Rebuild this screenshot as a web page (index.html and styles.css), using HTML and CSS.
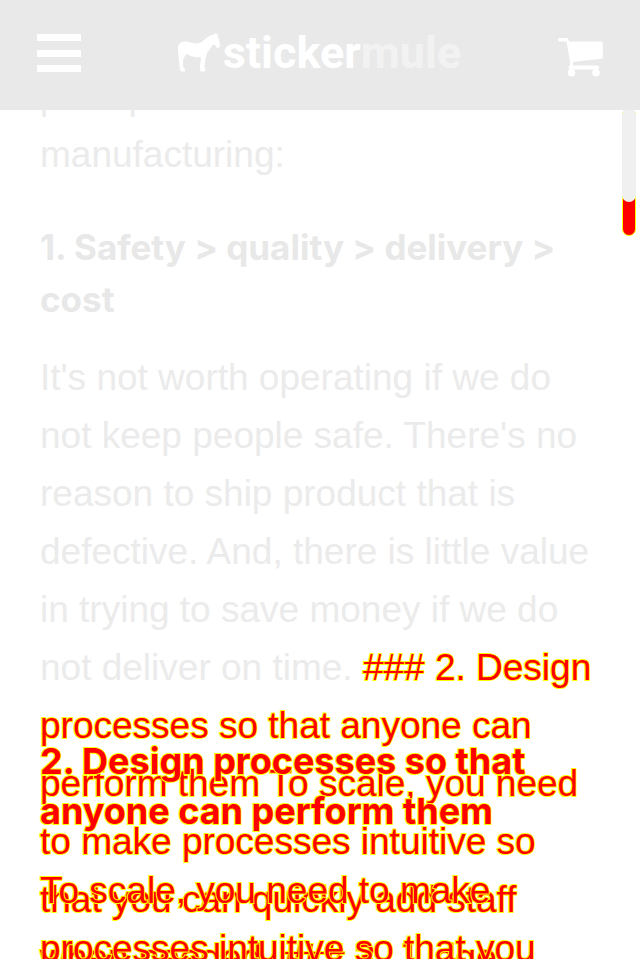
FILE: index.html
```html
<!DOCTYPE html>
<html lang="en">
<head>
<meta charset="utf-8">
<meta name="viewport" content="width=device-width, initial-scale=1">
<title>Sticker Mule manufacturing</title>
<link rel="stylesheet" href="styles.css">
</head>
<body>
<header class="topbar">
  <button class="icon-button" type="button" aria-label="Menu">
    <svg class="menu-icon" viewBox="0 0 44 40"><path d="M0 1h44v7H0zM0 17h44v7H0zM0 32h44v7H0z"/></svg>
  </button>
  <a class="brand" href="#" aria-label="Sticker Mule home">
    <svg class="mule" viewBox="0 0 43 40"><path d="M0 15C0 11 3 8.500 7 8.500c4 0 7 2 11 2 3 0 6-1.500 8-3.500C29 4 33 1.500 36 1.500L37 0l1 1.200L40 0l-.5 3C41 5 41.500 9 42 12c0 2.500-2 4-3.500 2.500C38 13 37 11.500 35 11.500c-2 3-4 6-6 8.500-1 5-2.500 9-2.500 14 .5 1.500 1 3 .3 4.500h-4c-1-.5-.8-1.500-.3-2.500-1-1-1-2-.5-3.500.8-3 .8-6 .8-8.500-5 .5-9 0-14-3-2 2-3.500 4-3.800 7 0 2 0 4 .3 6.500 1.500 1 2.200 2.500 1.700 4H3.500C1.500 37 1.500 35 1.500 32 1 26 0 21 0 15z"/></svg>
    <span class="wordmark">sticker<span class="wordmark-soft">mule</span></span>
  </a>
  <a class="icon-button" href="#" aria-label="Cart">
    <svg class="cart-icon" viewBox="0 0 45 39"><path d="M1.700 0H9q1 0 1.300 1.200L11 3.500h32q1.800 0 1.800 1.500v14q0 1.500-1.500 1.700L15 24v3.500h24.500q1.700 0 1.700 2t-1.700 2H12q-1.500 0-1.500-2 0-1.500 1.500-2V24L8.500 3.500H1.700Q0 3.500 0 1.700T1.700 0z"/><circle cx="13.500" cy="34.800" r="3.800"/><circle cx="38" cy="34.800" r="3.800"/></svg>
  </a>
</header>
<div class="scrollbar"><div class="scroll-thumb"></div></div>
<main class="stage">
  <article class="layer">
    <p class="copy">principles that <br>manufacturing:</p>
    <h3 class="title">1. Safety &gt; quality &gt; delivery &gt;<br>cost</h3>
    <p class="copy">It's not worth operating if we do<br>not keep people safe. There's no<br>reason to ship product that is<br>defective. And, there is little value<br>in trying to save money if we do<br>not deliver on time. <span class="changed">### 2. Design<br>processes so that anyone can<br>perform them To scale, you need<br>to make processes intuitive so<br>that you can quickly add staff<br>when needed. ### 3. Judge</span></p>
  </article>
  <section class="layer layer-next">
    <h3 class="title changed">2. Design processes so that<br>anyone can perform them</h3>
    <p class="copy changed">To scale, you need to make<br>processes intuitive so that you</p>
  </section>
</main>
</body>
</html>
```
FILE: styles.css
```css
* { box-sizing: border-box; }
html { height: 100%; overflow: hidden; }
body {
  margin: 0;
  height: 100%;
  overflow: hidden;
  background: #fff;
  color: #ebebeb;
  font-family: "Liberation Sans", Arial, sans-serif;
}
.topbar {
  position: relative;
  z-index: 2;
  height: 110px;
  padding: 0 37px 4px;
  display: flex;
  align-items: center;
  justify-content: space-between;
  background: #e9e9e9;
}
.icon-button {
  display: flex;
  padding: 0;
  border: 0;
  background: none;
}
svg { display: block; fill: #fff; }
.menu-icon { width: 44px; height: 40px; }
.cart-icon { width: 45px; height: 39px; margin-top: 8px; }
.brand {
  display: flex;
  align-items: center;
  gap: 2px;
  color: #fff;
  text-decoration: none;
}
.mule { width: 43px; height: 40px; }
.wordmark {
  font-family: Roboto, sans-serif;
  font-size: 45px;
  line-height: 44px;
  font-weight: 700;
}
.wordmark-soft { color: #f2f2f2; }
.scrollbar {
  position: absolute;
  top: 108px;
  right: 4px;
  width: 14px;
  height: 128px;
  border-radius: 7px;
  background: #f00;
  border: 1px solid #ff0;
}
.scroll-thumb {
  height: 94px;
  margin: -1px;
  border-radius: 7px;
  background: #f0f0f0;
}
.stage {
  display: grid;
  padding: 0 40px;
  white-space: nowrap;
}
.layer { grid-area: 1 / 1; min-width: 0; }
.layer:first-child { margin-top: -42px; }
.layer-next { padding-top: 626px; }
.copy {
  margin: 0;
  font-size: 37px;
  line-height: 58px;
}
.title {
  margin: 37px 0 24px;
  color: #e8e8e8;
  font-family: Inter, sans-serif;
  font-size: 35px;
  line-height: 52px;
  font-weight: 700;
}
.layer-next .title {
  margin: 0 0 26px;
  font-size: 36px;
  line-height: 50px;
}
.layer .changed {
  color: #f00;
  -webkit-text-stroke: 2px #ff0;
  paint-order: stroke fill;
}
```
